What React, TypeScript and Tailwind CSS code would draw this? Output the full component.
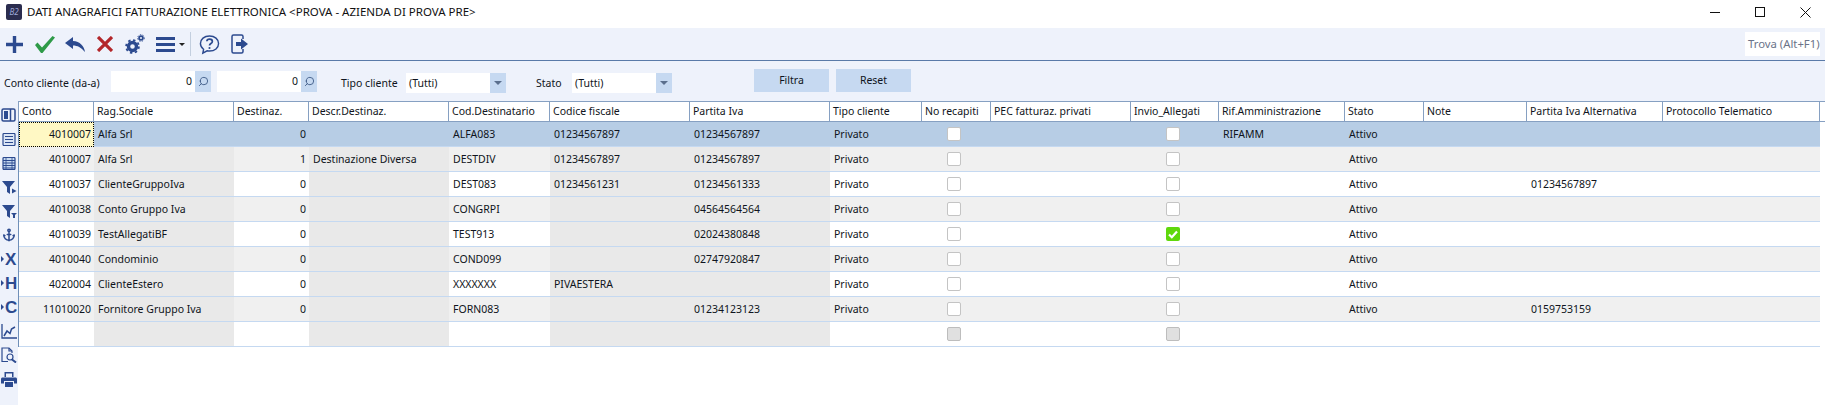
import React from "react";
import { Search, Anchor } from "lucide-react";

const cols = [
  { name: "Conto", w: 75, align: "right", shade: false },
  { name: "Rag.Sociale", w: 140, shade: true },
  { name: "Destinaz.", w: 75, align: "right", shade: false },
  { name: "Descr.Destinaz.", w: 140, shade: true },
  { name: "Cod.Destinatario", w: 101, shade: false },
  { name: "Codice fiscale", w: 140, shade: true },
  { name: "Partita Iva", w: 140, shade: true },
  { name: "Tipo cliente", w: 92, shade: false },
  { name: "No recapiti", w: 69, check: true, shade: false },
  { name: "PEC fatturaz. privati", w: 140, shade: false },
  { name: "Invio_Allegati", w: 88, check: true, shade: false },
  { name: "Rif.Amministrazione", w: 126, shade: false },
  { name: "Stato", w: 79, shade: false },
  { name: "Note", w: 103, shade: false },
  { name: "Partita Iva Alternativa", w: 136, shade: false },
  { name: "Protocollo Telematico", w: 157, shade: false },
];

const rows = [
  ["4010007", "Alfa Srl", "0", "", "ALFA083", "01234567897", "01234567897", "Privato", "", "", "", "RIFAMM", "Attivo", "", "", ""],
  ["4010007", "Alfa Srl", "1", "Destinazione Diversa", "DESTDIV", "01234567897", "01234567897", "Privato", "", "", "", "", "Attivo", "", "", ""],
  ["4010037", "ClienteGruppoIva", "0", "", "DEST083", "01234561231", "01234561333", "Privato", "", "", "", "", "Attivo", "", "01234567897", ""],
  ["4010038", "Conto Gruppo Iva", "0", "", "CONGRPI", "", "04564564564", "Privato", "", "", "", "", "Attivo", "", "", ""],
  ["4010039", "TestAllegatiBF", "0", "", "TEST913", "", "02024380848", "Privato", "", "", "yes", "", "Attivo", "", "", ""],
  ["4010040", "Condominio", "0", "", "COND099", "", "02747920847", "Privato", "", "", "", "", "Attivo", "", "", ""],
  ["4020004", "ClienteEstero", "0", "", "XXXXXXX", "PIVAESTERA", "", "Privato", "", "", "", "", "Attivo", "", "", ""],
  ["11010020", "Fornitore Gruppo Iva", "0", "", "FORN083", "", "01234123123", "Privato", "", "", "", "", "Attivo", "", "0159753159", ""],
  ["", "", "", "", "", "", "", "", "", "", "", "", "", "", "", ""],
];

const gridCols = cols.map((c) => c.w + "px").join(" ");
const blue = "#2c4a8f";

function Checkbox({ state }: { state: string }) {
  if (state === "on") {
    return (
      <div className="w-[14px] h-[14px] rounded-[2px] bg-[#5fd80c] flex items-center justify-center">
        <svg width="10" height="9" viewBox="0 0 10 9" fill="none" stroke="white" strokeWidth="2.2">
          <path d="M1 4.500L3.800 7.200L9 1.500" />
        </svg>
      </div>
    );
  }
  if (state === "off") {
    return <div className="w-[14px] h-[14px] rounded-[2px] bg-[#e0e0e0] border border-[#bdbdbd]" />;
  }
  return <div className="w-[14px] h-[14px] rounded-[2px] bg-white border border-[#c4c4c4]" />;
}

function Toolbar() {
  return (
    <div className="h-[33px] bg-[#eef2fb] border-b border-[#5a7aa8] flex items-center pl-[6px]">
      {/* plus */}
      <svg width="17" height="17" viewBox="0 0 17 17" fill={blue}>
        <path d="M6.800 0H10.200V6.800H17V10.200H10.200V17H6.800V10.200H0V6.800H6.800Z" />
      </svg>
      {/* check */}
      <svg width="20" height="17" viewBox="0 0 20 17" fill="#2e9a48" className="ml-[12px]">
        <path d="M0 9L2.500 6.500L7 11.500L17.500 0L20 1.500L7.500 17H6Z" />
      </svg>
      {/* reply */}
      <svg width="20" height="15" viewBox="0 0 20 15" fill={blue} className="ml-[10px]">
        <path d="M8 0L0 6L8 12V8.500C12.500 8.500 16 10.500 20 15C19 9 15 4.500 8 4Z" />
      </svg>
      {/* delete */}
      <svg width="16" height="16" viewBox="0 0 16 16" fill="none" stroke="#b3262a" strokeWidth="3.2" className="ml-[12px]">
        <path d="M1 1L15 15M15 1L1 15" />
      </svg>
      {/* gears */}
      <svg width="20" height="20" viewBox="0 0 20 20" fill="none" stroke={blue} className="ml-[12px]">
        <circle cx="7.500" cy="12.500" r="4" strokeWidth="3.400" />
        <circle cx="7.500" cy="12.500" r="6.400" strokeWidth="1.800" strokeDasharray="2.400 2.600" />
        <circle cx="16" cy="4" r="1.900" strokeWidth="1.800" />
        <circle cx="16" cy="4" r="3.300" strokeWidth="1" strokeDasharray="1.400 1.400" />
      </svg>
      <div className="ml-[11px] w-[19px] flex flex-col gap-[3px]">
        <div className="h-[3px] bg-[#2c4a8f]" />
        <div className="h-[3px] bg-[#2c4a8f]" />
        <div className="h-[3px] bg-[#2c4a8f]" />
      </div>
      <div className="ml-[4px] w-0 h-0 border-x-[3px] border-x-transparent border-t-[3px] border-t-[#222]" />
      <div className="ml-[5px] w-px h-[24px] bg-[#c3cfdf]" />
      {/* help */}
      <svg width="21" height="21" viewBox="0 0 22 22" fill="none" className="ml-[8px]">
        <path d="M11 2C5.500 2 1.500 5.500 1.500 10C1.500 12.500 2.800 14.600 4.800 16L4 20L8.500 17.600C9.300 17.800 10.100 17.900 11 17.900C16.500 17.900 20.500 14.500 20.500 10C20.500 5.500 16.500 2 11 2Z" stroke={blue} strokeWidth="1.500" />
        <path d="M8.200 7.600C8.400 4.600 14 4.600 14 7.800C14 10 11 10 11 12" stroke={blue} strokeWidth="1.800" />
        <circle cx="11" cy="14.600" r="1.100" fill={blue} />
      </svg>
      {/* exit */}
      <svg width="17" height="20" viewBox="0 0 17 20" fill="none" className="ml-[11px]">
        <path d="M12 5V2.500C12 1.500 11.500 1 10.500 1H2.500C1.500 1 1 1.500 1 2.500V17.500C1 18.500 1.500 19 2.500 19H10.500C11.500 19 12 18.500 12 17.500V15" stroke={blue} strokeWidth="1.500" />
        <path d="M5 8H10V4.500L17 10L10 15.500V12H5Z" fill={blue} />
      </svg>
      <div className="ml-auto mr-[5px] h-[24px] w-[75px] bg-white flex items-center pl-[3px] text-[11.3px] text-[#6b7389] whitespace-nowrap">
        Trova (Alt+F1)
      </div>
    </div>
  );
}

function NumberField() {
  return (
    <div className="flex h-[21px] mt-[10px]">
      <div className="w-[84px] bg-white text-right pr-[3px] leading-[21px]">0</div>
      <div className="w-[16px] bg-[#c6d9f1] flex items-center justify-center">
        <Search size={11} strokeWidth={2} className="text-[#3f5c88] -scale-x-100" />
      </div>
    </div>
  );
}

function ComboField() {
  return (
    <div className="flex h-[20px] mt-[12px]">
      <div className="w-[84px] bg-white pl-[3px] leading-[20px]">(Tutti)</div>
      <div className="w-[16px] bg-[#c6d9f1] flex items-center justify-center">
        <div className="w-0 h-0 border-x-[4px] border-x-transparent border-t-[4px] border-t-[#5b6f8d]" />
      </div>
    </div>
  );
}

function FilterBar() {
  return (
    <div className="h-[40px] bg-[#eef2fb] flex items-start pl-[4px]">
      <span className="w-[107px] mt-[12px] leading-[20px] whitespace-nowrap">Conto cliente (da-a)</span>
      <NumberField />
      <div className="ml-[6px]">
        <NumberField />
      </div>
      <span className="ml-[24px] w-[65px] mt-[12px] leading-[20px] whitespace-nowrap">Tipo cliente</span>
      <ComboField />
      <span className="ml-[30px] w-[36px] mt-[12px] leading-[20px] whitespace-nowrap">Stato</span>
      <ComboField />
      <div className="ml-[82px] mt-[8px] w-[75px] h-[23px] bg-[#c6d9f1] flex items-center justify-center">Filtra</div>
      <div className="ml-[7px] mt-[8px] w-[75px] h-[23px] bg-[#c6d9f1] flex items-center justify-center">Reset</div>
    </div>
  );
}

function Letter({ ch, size }: { ch: string; size: string }) {
  return (
    <div className="flex items-center">
      <div className="w-0 h-0 border-y-[3px] border-y-transparent border-l-[3px] border-l-[#2c4a8f]" />
      <span className={`ml-[1px] font-bold leading-none font-['Liberation_Sans',sans-serif] ${size}`}>{ch}</span>
    </div>
  );
}

function SideRail() {
  const c = blue;
  const slot = "h-[24px] flex items-center pl-[1px]";
  return (
    <div className="w-[18px] shrink-0 bg-[#eef2fb] flex flex-col pt-[2px] text-[#2c4a8f]">
      <div className={slot}>
        <svg width="15" height="14" viewBox="0 0 15 14" fill="none" stroke={c} strokeWidth="1.500">
          <rect x="1" y="1" width="13" height="12" rx="1.500" />
          <rect x="3" y="3" width="4" height="8" fill={c} stroke="none" />
          <path d="M9.500 1V13" />
        </svg>
      </div>
      <div className={slot}>
        <svg width="14" height="13" viewBox="0 0 14 13" fill="#dbe5f5" stroke={c} className="ml-[1px]">
          <rect x="1" y="0.500" width="12" height="12" rx="1" strokeWidth="1.200" />
          <path d="M3 3.500H11M3 6.500H11M3 9.500H11" />
        </svg>
      </div>
      <div className={slot}>
        <svg width="14" height="13" viewBox="0 0 14 13" fill="#c6d9f1" stroke={c} className="ml-[1px]">
          <rect x="1" y="0.500" width="12" height="12" rx="1" strokeWidth="1.200" />
          <path d="M1 3.500H13M1 6H13M1 8.500H13M1 11H13" strokeWidth="1.200" />
          <path d="M4 1V12M10 1V12" strokeWidth="0.800" />
        </svg>
      </div>
      <div className={slot}>
        <svg width="15" height="13" viewBox="0 0 15 13" fill={c} className="ml-[1px]">
          <path d="M0 0H13L8 6V13L5 11V6Z" />
          <path d="M10 7.500L14.500 10L10 12.500Z" />
        </svg>
      </div>
      <div className={slot}>
        <svg width="15" height="13" viewBox="0 0 15 13" fill={c} className="ml-[1px]">
          <path d="M0 0H13L8 6V13L5 11V6Z" />
          <path d="M9 8H15L13 10V13H11V10Z" />
        </svg>
      </div>
      <div className={slot}>
        <Anchor size={14} strokeWidth={2.600} className="ml-[1px]" />
      </div>
      <div className={slot}>
        <Letter ch="X" size="text-[17px]" />
      </div>
      <div className={slot}>
        <Letter ch="H" size="text-[17px]" />
      </div>
      <div className={slot}>
        <Letter ch="C" size="text-[17px]" />
      </div>
      <div className={slot}>
        <svg width="16" height="15" viewBox="0 0 16 15" fill="none" stroke={c} strokeWidth="1.300">
          <path d="M1 0V14H16" />
          <path d="M3 12L6 7L9 9.500L10.500 5L14 3" strokeWidth="1.500" />
        </svg>
      </div>
      <div className={slot}>
        <svg width="16" height="16" viewBox="0 0 16 16" fill="none" stroke={c} strokeWidth="1.200">
          <path d="M7 14.500H1V1H8L11 4V6" />
          <path d="M8 1V4H11" />
          <circle cx="9" cy="10" r="3" />
          <path d="M11 12.500L15 15.500" strokeWidth="2" />
        </svg>
      </div>
      <div className={slot}>
        <svg width="16" height="15" viewBox="0 0 16 15" fill={c}>
          <path d="M3.500 0H12.500V5H11V1.500H5V5H3.500Z" />
          <path d="M1.500 5.500H14.500C15.300 5.500 16 6.200 16 7V11.500H13V9H3V11.500H0V7C0 6.200 0.700 5.500 1.500 5.500Z" />
          <path d="M4 10H12V15H4Z" />
        </svg>
      </div>
    </div>
  );
}

function Cell({ col, val, row, first }: { col: any; val: string; row: number; first: boolean }) {
  let bg = row % 2 === 1 ? "bg-[#f0f0f0]" : "bg-white";
  if (col.shade) bg = "bg-[#e9e9e9]";
  if (row === 0) bg = "bg-[#b7cde5]";

  if (col.check) {
    const state = row === 8 ? "off" : val === "yes" ? "on" : "";
    return (
      <div className={`${bg} border-b border-[#c5d9f1] flex items-center justify-center pr-[5px]`}>
        <Checkbox state={state} />
      </div>
    );
  }
  if (first && row === 0) {
    return (
      <div className="bg-[#fff8c4] border border-dotted border-black pr-[2px] text-right leading-[23px] whitespace-nowrap">
        {val}
      </div>
    );
  }
  return (
    <div className={`${bg} border-b border-[#c5d9f1] whitespace-nowrap overflow-hidden leading-[24px] ${col.align === "right" ? "pr-[3px] text-right" : "pl-[4px]"}`}>
      {val}
    </div>
  );
}

export default function App() {
  return (
    <div className="w-[1825px] h-[405px] bg-white overflow-hidden text-[10.5px] text-[#0f1420] font-['Noto_Sans',sans-serif]">
      {/* title bar */}
      <div className="h-[28px] flex items-center pl-[6px] pb-[4px] bg-white">
        <div className="w-[16px] h-[16px] rounded-[2px] bg-[#2b2d4f] text-[#9fa8d8] text-[8px] italic flex items-center justify-center">B2</div>
        <span className="ml-[5px] text-[11.5px] text-[#111]">DATI ANAGRAFICI FATTURAZIONE ELETTRONICA &lt;PROVA - AZIENDA DI PROVA PRE&gt;</span>
        <div className="ml-auto flex items-center mr-[14px] gap-[35px]">
          <svg width="10" height="10" viewBox="0 0 10 10" stroke="#111"><path d="M0 5.500H10" /></svg>
          <svg width="10" height="10" viewBox="0 0 10 10" fill="none" stroke="#111"><rect x="0.500" y="0.500" width="9" height="9" /></svg>
          <svg width="11" height="11" viewBox="0 0 11 11" stroke="#111"><path d="M0.500 0.500L10.500 10.500M10.500 0.500L0.500 10.500" /></svg>
        </div>
      </div>

      <Toolbar />
      <FilterBar />

      <div className="flex h-[304px]">
        <SideRail />
        <div className="flex-1 min-w-0">
          {/* header */}
          <div className="grid h-[21px] border-y border-l border-[#86a0c2]" style={{ gridTemplateColumns: gridCols }}>
            {cols.map((c) => (
              <div key={c.name} className="border-r border-[#86a0c2] pl-[3px] leading-[19px] whitespace-nowrap overflow-hidden">
                {c.name}
              </div>
            ))}
          </div>
          {rows.map((r, i) => (
            <div key={i} className="grid h-[25px] border-l border-[#6f8fb8]" style={{ gridTemplateColumns: gridCols }}>
              {cols.map((c, j) => (
                <Cell key={c.name} col={c} val={r[j]} row={i} first={j === 0} />
              ))}
            </div>
          ))}
        </div>
      </div>
    </div>
  );
}
